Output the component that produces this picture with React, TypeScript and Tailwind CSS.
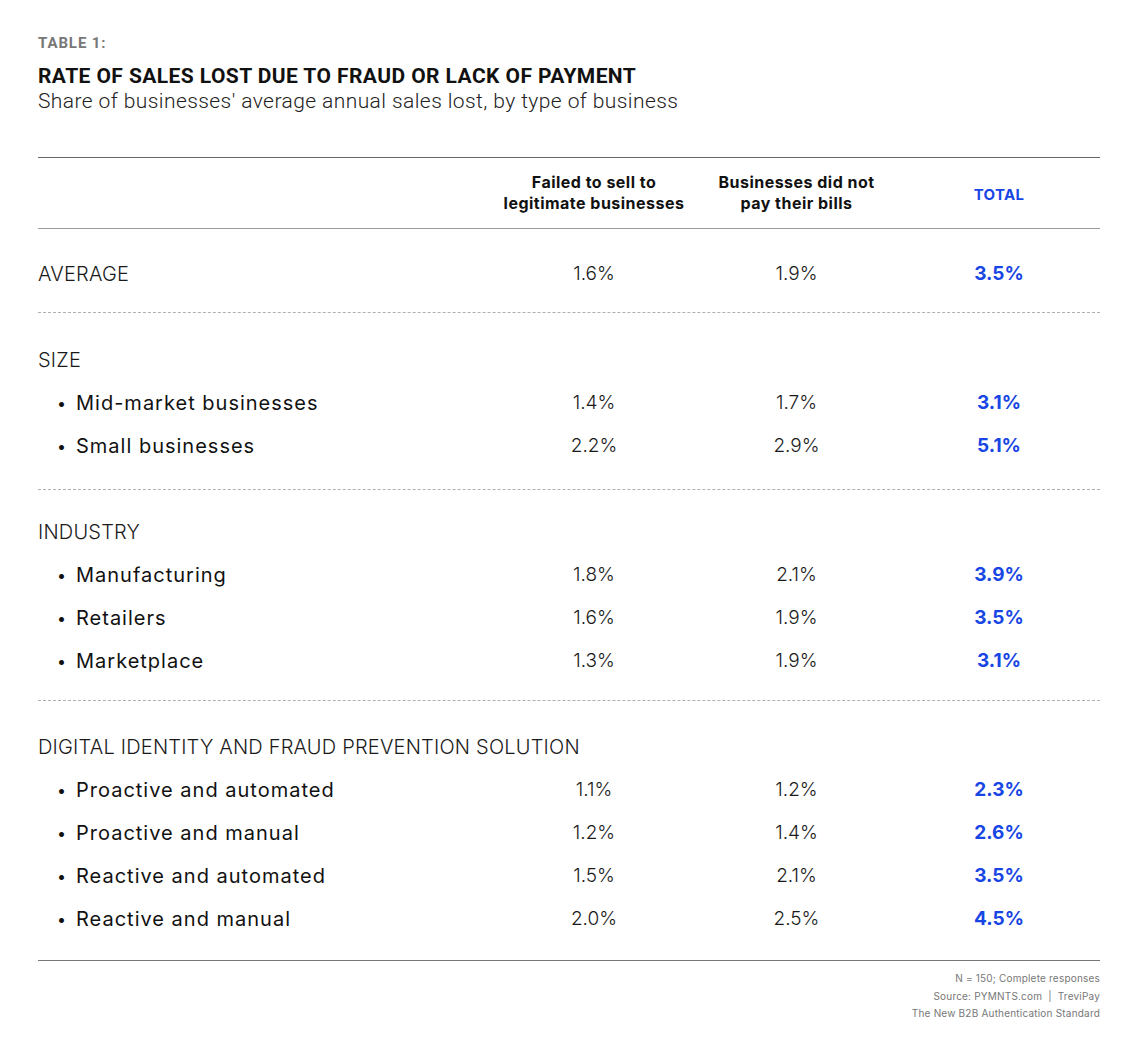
import React from 'react';

type Row = { label: string; a: string; b: string; total: string };
type Group = { title: string; rows: Row[]; pad: string; dotted: boolean };

const groups: Group[] = [
  {
    title: 'AVERAGE',
    rows: [],
    pad: 'pt-[23px] pb-[17px]',
    dotted: true,
  },
  {
    title: 'SIZE',
    rows: [
      { label: 'Mid-market businesses', a: '1.4%', b: '1.7%', total: '3.1%' },
      { label: 'Small businesses', a: '2.2%', b: '2.9%', total: '5.1%' },
    ],
    pad: 'pt-[25px] pb-[22px]',
    dotted: true,
  },
  {
    title: 'INDUSTRY',
    rows: [
      { label: 'Manufacturing', a: '1.8%', b: '2.1%', total: '3.9%' },
      { label: 'Retailers', a: '1.6%', b: '1.9%', total: '3.5%' },
      { label: 'Marketplace', a: '1.3%', b: '1.9%', total: '3.1%' },
    ],
    pad: 'pt-[20px] pb-[18px]',
    dotted: true,
  },
  {
    title: 'DIGITAL IDENTITY AND FRAUD PREVENTION SOLUTION',
    rows: [
      { label: 'Proactive and automated', a: '1.1%', b: '1.2%', total: '2.3%' },
      { label: 'Proactive and manual', a: '1.2%', b: '1.4%', total: '2.6%' },
      { label: 'Reactive and automated', a: '1.5%', b: '2.1%', total: '3.5%' },
      { label: 'Reactive and manual', a: '2.0%', b: '2.5%', total: '4.5%' },
    ],
    pad: 'pt-[24px] pb-[20px]',
    dotted: false,
  },
];

const cols = 'grid grid-cols-[1fr_202px_203px_202px] items-center';

const Values: React.FC<{ a: string; b: string; total: string }> = ({ a, b, total }) => (
  <>
    <div className="pt-[2px] text-center text-[19px] font-light text-[#1a1a1a]">{a}</div>
    <div className="pt-[2px] text-center text-[19px] font-light text-[#1a1a1a]">{b}</div>
    <div className="pt-[2px] text-center text-[19px] font-bold text-[#1846e4]">{total}</div>
  </>
);

export default function App() {
  return (
    <div
      className="w-[1138px] h-[1040px] bg-white px-[38px] pt-[34px] text-[#111]"
      style={{ fontFamily: 'Inter, "Noto Sans", sans-serif' }}
    >
      <div
        className="text-[15px] leading-[18px] font-bold text-[#777] tracking-[0.06em]"
        style={{ fontFamily: 'Roboto, "Liberation Sans", sans-serif' }}
      >
        TABLE 1:
      </div>
      <div
        className="mt-[12px] text-[21px] leading-[24px] font-bold tracking-[0.02em] text-[#111]"
        style={{ fontFamily: 'Roboto, "Liberation Sans", sans-serif' }}
      >
        RATE OF SALES LOST DUE TO FRAUD OR LACK OF PAYMENT
      </div>
      <div
        className="text-[21px] leading-[26px] font-light tracking-[0.02em] text-[#222]"
        style={{ fontFamily: 'Roboto, "Liberation Sans", sans-serif' }}
      >
        Share of businesses' average annual sales lost, by type of business
      </div>

      {/* header */}
      <div className={`${cols} mt-[43px] h-[72px] border-t border-t-[#666] border-b-[1.5px] border-b-[#9a9a9a]`}>
        <div />
        <div className="text-center text-[16px] leading-[21px] font-bold tracking-[0.03em] text-[#111]">
          Failed to sell to
          <br />
          legitimate businesses
        </div>
        <div className="text-center text-[16px] leading-[21px] font-bold tracking-[0.03em] text-[#111]">
          Businesses did not
          <br />
          pay their bills
        </div>
        <div className="pt-[4px] text-center text-[15px] font-bold tracking-[0.02em] text-[#1846e4]">TOTAL</div>
      </div>

      {groups.map((g) => (
        <div
          key={g.title}
          className={`${g.pad} ${
            g.dotted ? 'border-b border-dashed border-b-[#b0b0b0]' : 'border-b-[1.5px] border-b-[#777]'
          }`}
        >
          <div className={`${cols} h-[43px]`}>
            <div className="whitespace-nowrap text-[20px] font-light tracking-[0.01em] text-[#1a1a1a]">{g.title}</div>
            {g.title === 'AVERAGE' && <Values a="1.6%" b="1.9%" total="3.5%" />}
          </div>
          {g.rows.map((r) => (
            <div key={r.label} className={`${cols} h-[43px]`}>
              <div className="flex items-center pl-[19px] text-[20px] tracking-[0.05em] text-[#111]">
                <span className="w-[19px] text-[16px]">•</span>
                <span>{r.label}</span>
              </div>
              <Values a={r.a} b={r.b} total={r.total} />
            </div>
          ))}
        </div>
      ))}

      <div className="mt-[9px] text-right text-[10px] leading-[17.5px] tracking-[0.02em] text-[#777]">
        <div>N = 150; Complete responses</div>
        <div>Source: PYMNTS.com&nbsp; |&nbsp; TreviPay</div>
        <div>The New B2B Authentication Standard</div>
      </div>
    </div>
  );
}
